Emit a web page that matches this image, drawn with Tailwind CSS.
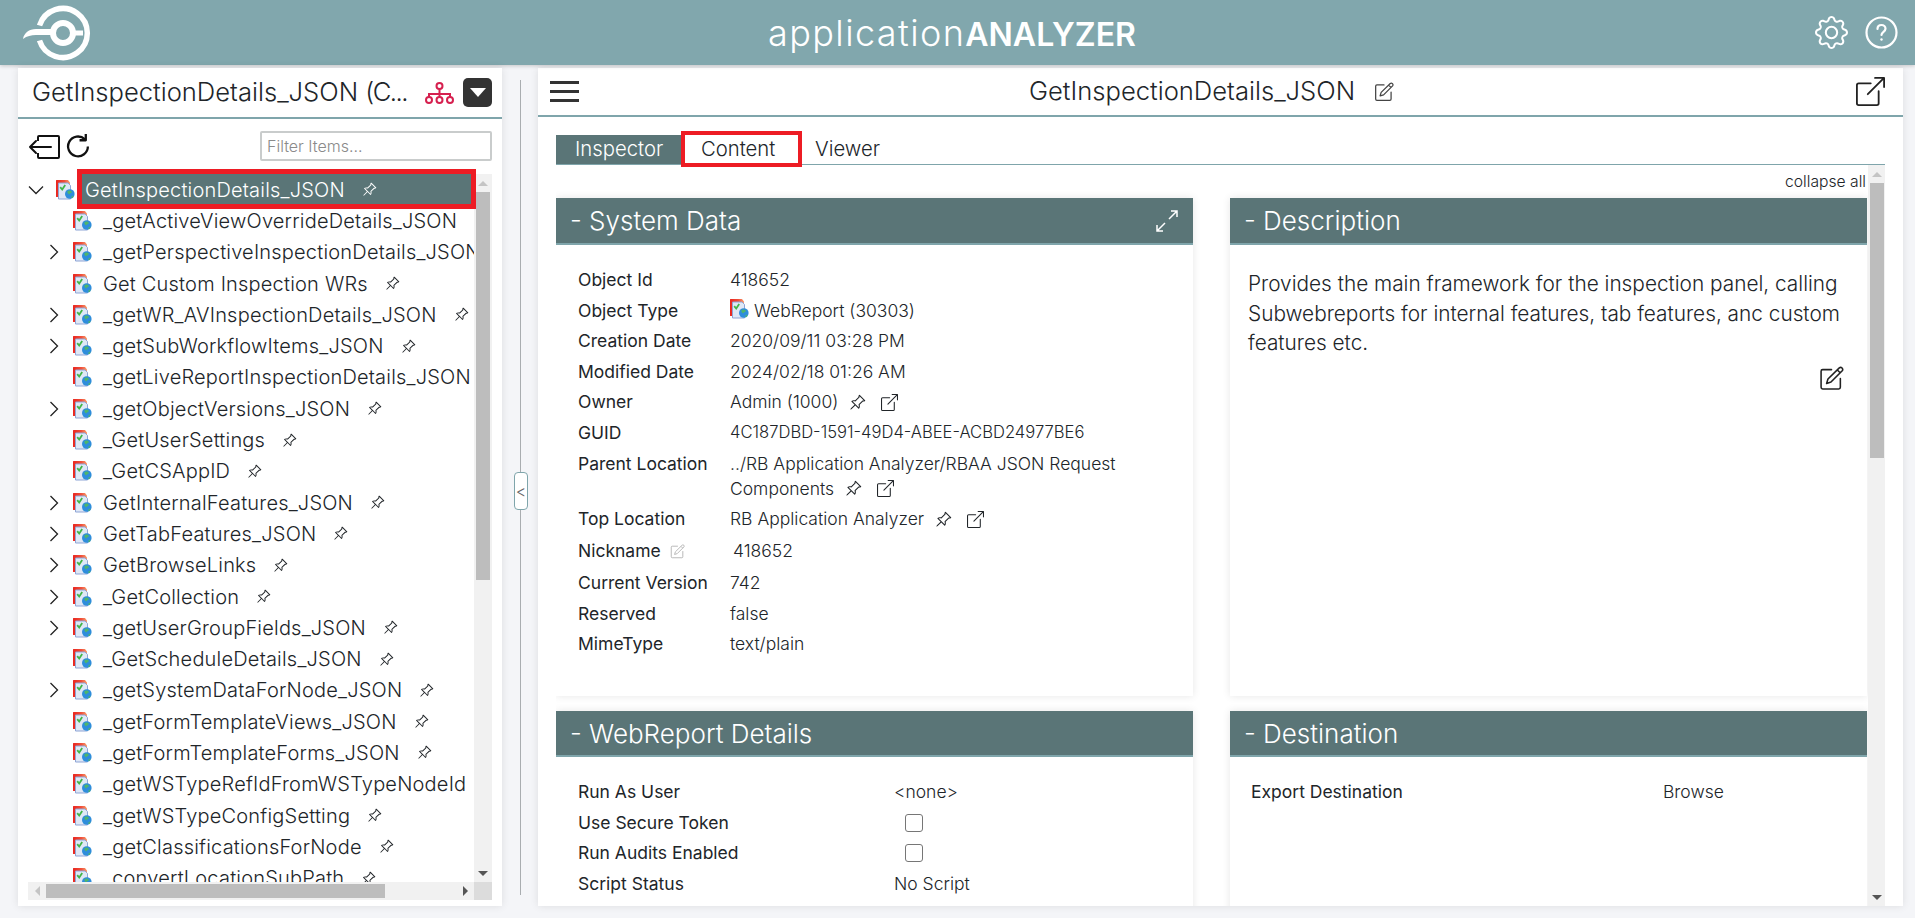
<!DOCTYPE html>
<html lang="en">
  <head>
    <meta charset="UTF-8" />
    <title>applicationANALYZER</title>
    <script src="https://cdn.jsdelivr.net/npm/@tailwindcss/browser@4"></script>
  </head>
  <body class="bg-[#f4f5f8] h-screen overflow-hidden font-[Inter,sans-serif] font-light text-[#212529]">
    <svg class="absolute w-0 h-0">
      <defs>
        <linearGradient id="wrRed" x1="0" y1="0" x2="1" y2="0">
          <stop offset="0" stop-color="#e8251f" />
          <stop offset="0.6" stop-color="#f0503a" />
          <stop offset="1" stop-color="#f8a070" />
        </linearGradient>
      </defs>
      <symbol id="pin" viewBox="0 0 16 16">
        <path fill="currentColor" d="M9.828.722a.5.5 0 0 1 .354.146l4.95 4.95a.5.5 0 0 1 0 .707c-.48.48-1.072.588-1.503.588-.177 0-.335-.018-.46-.039l-3.134 3.134a5.927 5.927 0 0 1 .16 1.013c.046.702-.032 1.687-.72 2.375a.5.5 0 0 1-.707 0l-2.829-2.828-3.182 3.182c-.195.195-1.219.902-1.414.707-.195-.195.512-1.22.707-1.414l3.182-3.182-2.828-2.829a.5.5 0 0 1 0-.707c.688-.688 1.673-.767 2.375-.72a5.922 5.922 0 0 1 1.013.16l3.134-3.133a2.772 2.772 0 0 1-.04-.461c0-.43.108-1.022.589-1.503a.5.5 0 0 1 .353-.146zm.122 2.112v-.002.002zm0-.002v.002a.5.5 0 0 1-.122.51L6.293 6.878a.5.5 0 0 1-.511.12H5.78l-.014-.004a4.507 4.507 0 0 0-.288-.076 4.922 4.922 0 0 0-.765-.116c-.422-.028-.836.008-1.175.15l5.51 5.509c.141-.34.177-.753.149-1.175a4.924 4.924 0 0 0-.192-1.054l-.004-.013v-.001a.5.5 0 0 1 .12-.512l3.536-3.535a.5.5 0 0 1 .532-.115l.096.022c.087.017.208.034.344.034.114 0 .23-.011.343-.04L9.927 2.028c-.029.113-.04.23-.04.343a1.779 1.779 0 0 0 .062.46z" />
      </symbol>
      <symbol id="ext" viewBox="0 0 16 16">
        <path fill="currentColor" d="M8.636 3.5a.5.5 0 0 0-.5-.5H1.5A1.5 1.5 0 0 0 0 4.5v10A1.5 1.5 0 0 0 1.5 16h10a1.5 1.5 0 0 0 1.5-1.5V7.864a.5.5 0 0 0-1 0V14.5a.5.5 0 0 1-.5.5h-10a.5.5 0 0 1-.5-.5v-10a.5.5 0 0 1 .5-.5h6.636a.5.5 0 0 0 .5-.5z" />
        <path fill="currentColor" d="M16 .5a.5.5 0 0 0-.5-.5h-5a.5.5 0 0 0 0 1h3.793L6.146 9.146a.5.5 0 1 0 .708.708L15 1.707V5.5a.5.5 0 0 0 1 0v-5z" />
      </symbol>
      <symbol id="edit" viewBox="0 0 24 24">
        <path fill="none" stroke="currentColor" stroke-width="1.5" stroke-linecap="round" stroke-linejoin="round" d="M12 3.5H3.5A1.5 1.5 0 0 0 2 5v15.5A1.5 1.5 0 0 0 3.5 22H19a1.5 1.5 0 0 0 1.5-1.5V12" />
        <path fill="none" stroke="currentColor" stroke-width="1.5" stroke-linejoin="round" d="M19.5 1.8a2 2 0 0 1 2.8 2.8L11.5 15.4l-4.2 1.3 1.3-4.2zM17.6 3.8l2.7 2.7" />
      </symbol>
      <symbol id="wr" viewBox="0 0 19 20">
        <path fill="url(#wrRed)" d="M0 .5A.5.5 0 0 1 .5 0H12l2 2.500V5H3v12H.5a.5.5 0 0 1-.5-.5z" />
        <path fill="#dfe8f6" stroke="#8ea5d6" stroke-width="1" d="M2.500 3h9.500l2.500 2.500V19h-12z" />
        <path fill="none" stroke="#42b549" stroke-width="1.800" d="M4.200 7.200l2 2.300 3-4.500" />
        <circle cx="13.800" cy="14" r="4.800" fill="#2e8ddb" />
        <path fill="#4fb56c" d="M11.500 11c1.800-1 3.800-.5 4.500 1-.7 1.200-2 .8-2.500 2.200-.8.400-2.500-1-2-3.200zM15 17l2-1.500.4 1.300-1.400 1.400z" />
      </symbol>
    </svg>

    <header class="h-[65px] bg-[#81a7ad] flex items-center justify-between shadow-[0_1px_4px_rgba(0,0,0,.2)] relative">
      <svg viewBox="0 0 120 64" class="w-[120px] h-[64px] shrink-0">
        <g fill="none" stroke="#fff">
          <circle cx="63" cy="32" r="10" stroke-width="6" />
          <path stroke-width="5.500" d="M39.500 24.500a24.500 24.500 0 1 1 0 15" />
          <path stroke-width="5" d="M73 32h10" />
        </g>
        <path fill="#fff" d="M23 38c1-6 6-10 13-10h17v6H36c-5 0-9 1-13 4z" />
      </svg>
      <div class="text-white text-[32px] font-light -ml-[31px]"><span class="text-[36px] tracking-[1.400px]">application</span><span class="font-semibold">ANALYZER</span></div>
      <div class="flex items-center gap-[17px] pr-[17px] text-white">
        <svg viewBox="0 0 16 16" class="w-[33px] h-[33px]" fill="currentColor">
          <path d="M8 4.754a3.246 3.246 0 1 0 0 6.492 3.246 3.246 0 0 0 0-6.492zM5.754 8a2.246 2.246 0 1 1 4.492 0 2.246 2.246 0 0 1-4.492 0z" />
          <path d="M9.796 1.343c-.527-1.79-3.065-1.79-3.592 0l-.094.319a.873.873 0 0 1-1.255.52l-.292-.16c-1.64-.892-3.433.902-2.54 2.541l.159.292a.873.873 0 0 1-.52 1.255l-.319.094c-1.79.527-1.79 3.065 0 3.592l.319.094a.873.873 0 0 1 .52 1.255l-.16.292c-.892 1.64.901 3.434 2.541 2.54l.292-.159a.873.873 0 0 1 1.255.52l.094.319c.527 1.79 3.065 1.79 3.592 0l.094-.319a.873.873 0 0 1 1.255-.52l.292.16c1.64.893 3.434-.902 2.54-2.541l-.159-.292a.873.873 0 0 1 .52-1.255l.319-.094c1.79-.527 1.79-3.065 0-3.592l-.319-.094a.873.873 0 0 1-.52-1.255l.16-.292c.893-1.64-.902-3.433-2.541-2.54l-.292.159a.873.873 0 0 1-1.255-.52l-.094-.319zm-2.633.283c.246-.835 1.428-.835 1.674 0l.094.319a1.873 1.873 0 0 0 2.693 1.115l.291-.16c.764-.415 1.6.42 1.184 1.185l-.159.292a1.873 1.873 0 0 0 1.116 2.692l.318.094c.835.246.835 1.428 0 1.674l-.319.094a1.873 1.873 0 0 0-1.115 2.693l.16.291c.415.764-.42 1.6-1.185 1.184l-.291-.159a1.873 1.873 0 0 0-2.693 1.116l-.094.318c-.246.835-1.428.835-1.674 0l-.094-.319a1.873 1.873 0 0 0-2.692-1.115l-.292.16c-.764.415-1.6-.42-1.184-1.185l.159-.291A1.873 1.873 0 0 0 1.945 8.93l-.319-.094c-.835-.246-.835-1.428 0-1.674l.319-.094A1.873 1.873 0 0 0 3.06 4.377l-.16-.292c-.415-.764.42-1.6 1.185-1.184l.292.159a1.873 1.873 0 0 0 2.692-1.115l.094-.319z" />
        </svg>
        <svg viewBox="0 0 33 33" class="w-[33px] h-[33px]" fill="none" stroke="currentColor" stroke-width="2.200">
          <circle cx="16.500" cy="16.500" r="15" />
          <path stroke-linecap="round" d="M12.500 13c0-2.500 1.800-4 4-4s4 1.500 4 3.800c0 3-4 3.200-4 6.200" />
          <circle cx="16.500" cy="23.500" r="1.200" fill="currentColor" stroke="none" />
        </svg>
      </div>
    </header>

    <main class="flex pt-[3px] h-[853px]">
      <!-- left tree panel -->
      <section class="ml-[18px] w-[484px] h-[838px] bg-white shadow-[0_0_8px_rgba(0,0,0,.1)] flex flex-col relative shrink-0">
        <div class="h-[51px] border-b-2 border-[#7fa5ab] flex items-center pl-[14px] pr-[10px] shrink-0">
          <div class="text-[25.600px] w-[391px] whitespace-nowrap overflow-hidden">GetInspectionDetails_JSON <span class="tracking-[-1.500px]">(C...</span></div>
          <svg viewBox="0 0 29 22" class="w-[29px] h-[22px] ml-[2px]" fill="none" stroke="#d6204f" stroke-width="2">
            <circle cx="14.500" cy="4" r="3" />
            <path d="M14.500 7v5M4 15v-3h21v3M14.500 12v3" />
            <circle cx="4" cy="18" r="3" /><circle cx="14.500" cy="18" r="3" /><circle cx="25" cy="18" r="3" />
          </svg>
          <div class="ml-[9px] w-[29px] h-[29px] rounded-[5px] bg-[#333] flex items-center justify-center">
            <div class="w-0 h-0 border-x-[8px] border-x-transparent border-t-[9px] border-t-white"></div>
          </div>
        </div>
        <div class="h-[55px] flex items-center pl-[10px] pr-[10px] shrink-0">
          <svg viewBox="0 0 32 24" class="w-[32px] h-[24px]" fill="none" stroke="#111" stroke-width="2">
            <path d="M10 6V2a1 1 0 0 1 1-1h19a1 1 0 0 1 1 1v20a1 1 0 0 1-1 1H11a1 1 0 0 1-1-1v-4" />
            <path stroke-linecap="round" stroke-linejoin="round" d="M23 12H2M8 6l-6 6 6 6" />
          </svg>
          <svg viewBox="0 0 24 24" class="w-[25px] h-[25px] ml-[6px]" fill="none" stroke="#111" stroke-width="2.200">
            <path d="M21 12a9.500 9.500 0 1 1-3-7" />
            <path stroke-linejoin="round" d="M19 0v6h-6" />
          </svg>
          <input placeholder="Filter Items..." class="ml-auto -mt-[2px] w-[232px] h-[30px] border-2 border-[#c9cccc] rounded-[2px] px-[5px] text-[16px] font-light placeholder:text-[#8a8a8a] font-[Inter,sans-serif]" />
        </div>
        <div class="flex pl-[10px] pr-[10px] h-[708px] shrink-0">
          <div id="tree" class="w-[446px] overflow-hidden whitespace-nowrap text-[20px] tracking-[.2px]"></div>
          <div class="w-[18px] bg-[#f1f1f1] flex flex-col items-center">
            <div class="h-[18px] flex items-center"><div class="w-0 h-0 border-x-[5px] border-x-transparent border-b-[5px] border-b-[#c4c4c4]"></div></div>
            <div class="w-[14px] h-[388px] bg-[#bdbdbd]"></div>
            <div class="mt-auto h-[18px] flex items-center"><div class="w-0 h-0 border-x-[5px] border-x-transparent border-t-[5px] border-t-[#555]"></div></div>
          </div>
        </div>
        <div class="flex pl-[10px] pr-[10px] h-[18px] shrink-0">
          <div class="w-[446px] bg-[#f1f1f1] flex items-center">
            <div class="w-[18px] flex justify-center"><div class="w-0 h-0 border-y-[5px] border-y-transparent border-r-[5px] border-r-[#c4c4c4]"></div></div>
            <div class="w-[339px] h-[14px] bg-[#bdbdbd]"></div>
            <div class="ml-auto w-[18px] flex justify-center"><div class="w-0 h-0 border-y-[5px] border-y-transparent border-l-[5px] border-l-[#555]"></div></div>
          </div>
          <div class="w-[18px] bg-[#dcdcdc]"></div>
        </div>
        <!-- red annotation box around the selected node -->
        <div class="absolute left-[59px] top-[101px] w-[399px] h-[40px] border-[5px] border-[#ed1c24]"></div>
      </section>

      <!-- splitter -->
      <div class="w-[36px] shrink-0 h-[827px] relative flex justify-center">
        <div class="w-px h-[815px] mt-[12px] bg-[#a9adb0]"></div>
        <div class="absolute left-[12px] top-[404px] w-[14px] h-[38px] bg-white border border-[#7fa5ab] rounded-[4px] flex items-center justify-center text-[16px] text-[#666]">&lt;</div>
      </div>

      <!-- right panel -->
      <section class="w-[1365px] h-[838px] bg-white shadow-[0_0_8px_rgba(0,0,0,.1)] flex flex-col shrink-0">
        <div class="h-[49px] border-b-2 border-[#7fa5ab] flex items-center pl-[12px] pr-[18px] shrink-0 relative">
          <div class="w-[29px] flex flex-col gap-[6px]">
            <div class="h-[3px] bg-[#333]"></div><div class="h-[3px] bg-[#333]"></div><div class="h-[3px] bg-[#333]"></div>
          </div>
          <div class="ml-[450px] text-[25.600px] whitespace-nowrap">GetInspectionDetails_JSON</div>
          <svg class="w-[20px] h-[20px] ml-[19px] text-[#444]"><use href="#edit" /></svg>
          <svg class="w-[29px] h-[29px] ml-auto text-[#222]"><use href="#ext" /></svg>
        </div>
        <div class="pt-[18px] pl-[18px] pr-[18px] shrink-0">
          <div class="flex h-[30px] border-b border-[#7fa5ab] text-[20.300px] relative">
            <div class="w-[127px] bg-[#5a7577] text-white pl-[19px] flex items-center">Inspector</div>
            <div class="w-[119px] pl-[18px] flex items-center">Content</div>
            <div class="pl-[13px] flex items-center">Viewer</div>
            <div class="absolute left-[125px] top-[-4px] w-[121px] h-[36px] border-4 border-[#ed1c24]"></div>
          </div>
        </div>
        <div class="flex flex-1 min-h-0 pl-[18px] pr-[18px]">
          <div class="w-[1312px] overflow-hidden">
            <div class="h-[33px] text-[15.700px] text-right pr-[2px] flex items-center justify-end">collapse all</div>
            <div class="grid grid-cols-[637px_637px] gap-x-[37px] gap-y-[15px]">
              <div class="bg-white h-[498px] shadow-[0_0_8px_rgba(0,0,0,.1)]">
                <div class="h-[47px] bg-[#5a7577] border-b-2 border-[#7fa5ab] text-white text-[26px] pl-[14px] pr-[14px] flex items-center justify-between">
                  <span>- System Data</span>
                  <svg viewBox="0 0 24 24" class="w-[24px] h-[24px]" fill="none" stroke="#fff" stroke-width="1.500"><path d="M14 10l8-8M16 2h6v6M10 14l-8 8M2 16v6h6" /></svg>
                </div>
                <div id="system" class="pl-[22px] pt-[20px] pr-[40px] text-[17.500px]">
                  <div class="flex h-[30.500px] items-center"><div class="w-[152px] font-normal">Object Id</div><div>418652</div></div>
                  <div class="flex h-[30.500px] items-center"><div class="w-[152px] font-normal">Object Type</div><div class="flex items-center"><svg class="w-[19px] h-[20px] mr-[5px] -mt-[4px]"><use href="#wr" /></svg>WebReport (30303)</div></div>
                  <div class="flex h-[30.500px] items-center"><div class="w-[152px] font-normal">Creation Date</div><div>2020/09/11 03:28 PM</div></div>
                  <div class="flex h-[30.500px] items-center"><div class="w-[152px] font-normal">Modified Date</div><div>2024/02/18 01:26 AM</div></div>
                  <div class="flex h-[30.500px] items-center"><div class="w-[152px] font-normal">Owner</div><div class="flex items-center">Admin (1000)<svg class="w-[17px] h-[17px] ml-[11px]"><use href="#pin" /></svg><svg class="w-[17px] h-[17px] ml-[15px]"><use href="#ext" /></svg></div></div>
                  <div class="flex h-[30.500px] items-center"><div class="w-[152px] font-normal">GUID</div><div class="text-[16.600px]">4C187DBD-1591-49D4-ABEE-ACBD24977BE6</div></div>
                  <div class="flex h-[56px] items-start pt-[3px]"><div class="w-[152px] font-normal">Parent Location</div><div class="leading-[25px]">../RB Application Analyzer/RBAA JSON Request<br /><span class="inline-flex items-center">Components<svg class="w-[17px] h-[17px] ml-[11px]"><use href="#pin" /></svg><svg class="w-[17px] h-[17px] ml-[15px]"><use href="#ext" /></svg></span></div></div>
                  <div class="flex h-[30.500px] items-center"><div class="w-[152px] font-normal">Top Location</div><div class="flex items-center">RB Application Analyzer<svg class="w-[17px] h-[17px] ml-[11px]"><use href="#pin" /></svg><svg class="w-[17px] h-[17px] ml-[15px]"><use href="#ext" /></svg></div></div>
                  <div class="flex h-[33px] items-center"><div class="w-[152px] font-normal flex items-center">Nickname<svg class="w-[15px] h-[15px] ml-[9px] text-[#b5b5b5]"><use href="#edit" /></svg></div><div class="ml-[3px]">418652</div></div>
                  <div class="flex h-[31px] items-center"><div class="w-[152px] font-normal">Current Version</div><div>742</div></div>
                  <div class="flex h-[30.500px] items-center"><div class="w-[152px] font-normal">Reserved</div><div>false</div></div>
                  <div class="flex h-[30.500px] items-center"><div class="w-[152px] font-normal">MimeType</div><div>text/plain</div></div>
                </div>
              </div>
              <div class="bg-white h-[498px] shadow-[0_0_8px_rgba(0,0,0,.1)] relative">
                <div class="h-[47px] bg-[#5a7577] border-b-2 border-[#7fa5ab] text-white text-[26px] pl-[14px] flex items-center">- Description</div>
                <div class="pl-[18px] pr-[20px] pt-[24px] text-[20.800px] leading-[29.500px]">Provides the main framework for the inspection panel, calling Subwebreports for internal features, tab features, anc custom features etc.</div>
                <div class="flex justify-end pr-[23px] mt-[8px]"><svg class="w-[25px] h-[25px] text-[#222]"><use href="#edit" /></svg></div>
              </div>
              <div class="bg-white h-[300px] shadow-[0_0_8px_rgba(0,0,0,.1)]">
                <div class="h-[46px] bg-[#5a7577] border-b-2 border-[#7fa5ab] text-white text-[26px] pl-[14px] flex items-center">- WebReport Details</div>
                <div class="pl-[22px] pt-[20px] text-[17.500px]">
                  <div class="flex h-[30.500px] items-center"><div class="w-[316px] font-normal">Run As User</div><div>&lt;none&gt;</div></div>
                  <div class="flex h-[30.500px] items-center"><div class="w-[316px] font-normal">Use Secure Token</div><div class="ml-[11px] w-[18px] h-[18px] border border-[#767676] rounded-[3px]"></div></div>
                  <div class="flex h-[30.500px] items-center"><div class="w-[316px] font-normal">Run Audits Enabled</div><div class="ml-[11px] w-[18px] h-[18px] border border-[#767676] rounded-[3px]"></div></div>
                  <div class="flex h-[30.500px] items-center"><div class="w-[316px] font-normal">Script Status</div><div>No Script</div></div>
                </div>
              </div>
              <div class="bg-white h-[300px] shadow-[0_0_8px_rgba(0,0,0,.1)]">
                <div class="h-[46px] bg-[#5a7577] border-b-2 border-[#7fa5ab] text-white text-[26px] pl-[14px] flex items-center">- Destination</div>
                <div class="pl-[21px] pt-[20px] text-[17.500px]">
                  <div class="flex h-[30.500px] items-center"><div class="w-[412px] font-normal">Export Destination</div><div>Browse</div></div>
                </div>
              </div>
            </div>
          </div>
          <div class="w-[17px] bg-[#f1f1f1] flex flex-col items-center">
            <div class="h-[18px] flex items-center"><div class="w-0 h-0 border-x-[5px] border-x-transparent border-b-[5px] border-b-[#c4c4c4]"></div></div>
            <div class="w-[14px] h-[275px] bg-[#bdbdbd]"></div>
            <div class="mt-auto h-[18px] flex items-center"><div class="w-0 h-0 border-x-[5px] border-x-transparent border-t-[5px] border-t-[#555]"></div></div>
          </div>
        </div>
      </section>
    </main>

    <script>
      // name, has children, has pin
      const nodes = [
        ["_getActiveViewOverrideDetails_JSON", false, false],
        ["_getPerspectiveInspectionDetails_JSON", true, false],
        ["Get Custom Inspection WRs", false, true],
        ["_getWR_AVInspectionDetails_JSON", true, true],
        ["_getSubWorkflowItems_JSON", true, true],
        ["_getLiveReportInspectionDetails_JSON", false, false],
        ["_getObjectVersions_JSON", true, true],
        ["_GetUserSettings", false, true],
        ["_GetCSAppID", false, true],
        ["GetInternalFeatures_JSON", true, true],
        ["GetTabFeatures_JSON", true, true],
        ["GetBrowseLinks", true, true],
        ["_GetCollection", true, true],
        ["_getUserGroupFields_JSON", true, true],
        ["_GetScheduleDetails_JSON", false, true],
        ["_getSystemDataForNode_JSON", true, true],
        ["_getFormTemplateViews_JSON", false, true],
        ["_getFormTemplateForms_JSON", false, true],
        ["_getWSTypeRefIdFromWSTypeNodeId", false, false],
        ["_getWSTypeConfigSetting", false, true],
        ["_getClassificationsForNode", false, true],
        ["_convertLocationSubPath", false, true],
      ];

      const chevronRight = '<svg viewBox="0 0 10 16" class="w-[10px] h-[16px]" fill="none" stroke="#222" stroke-width="1.300"><path d="M1.500 1l7 7-7 7" /></svg>';

      let html =
        '<div class="h-[31.300px] flex items-center">' +
        '<div class="w-[28px] shrink-0"><svg viewBox="0 0 16 10" class="w-[16px] h-[10px]" fill="none" stroke="#222" stroke-width="1.300"><path d="M1 1.500l7 7 7-7" /></svg></div>' +
        '<svg class="w-[19px] h-[20px] shrink-0"><use href="#wr" /></svg>' +
        '<div class="ml-[7px] flex-1 h-[31px] bg-[#5a7577] text-white pl-[3px] flex items-center">GetInspectionDetails_JSON<svg class="w-[15px] h-[15px] ml-[17px]"><use href="#pin" /></svg></div>' +
        "</div>";

      for (const [name, hasKids, hasPin] of nodes) {
        html +=
          '<div class="h-[31.300px] flex items-center pl-[21px]">' +
          '<div class="w-[24px] shrink-0">' + (hasKids ? chevronRight : "") + "</div>" +
          '<svg class="w-[19px] h-[20px] shrink-0"><use href="#wr" /></svg>' +
          '<span class="ml-[11px]">' + name + "</span>" +
          (hasPin ? '<svg class="w-[15px] h-[15px] ml-[17px] shrink-0"><use href="#pin" /></svg>' : "") +
          "</div>";
      }
      document.getElementById("tree").innerHTML = html;
    </script>
  </body>
</html>
